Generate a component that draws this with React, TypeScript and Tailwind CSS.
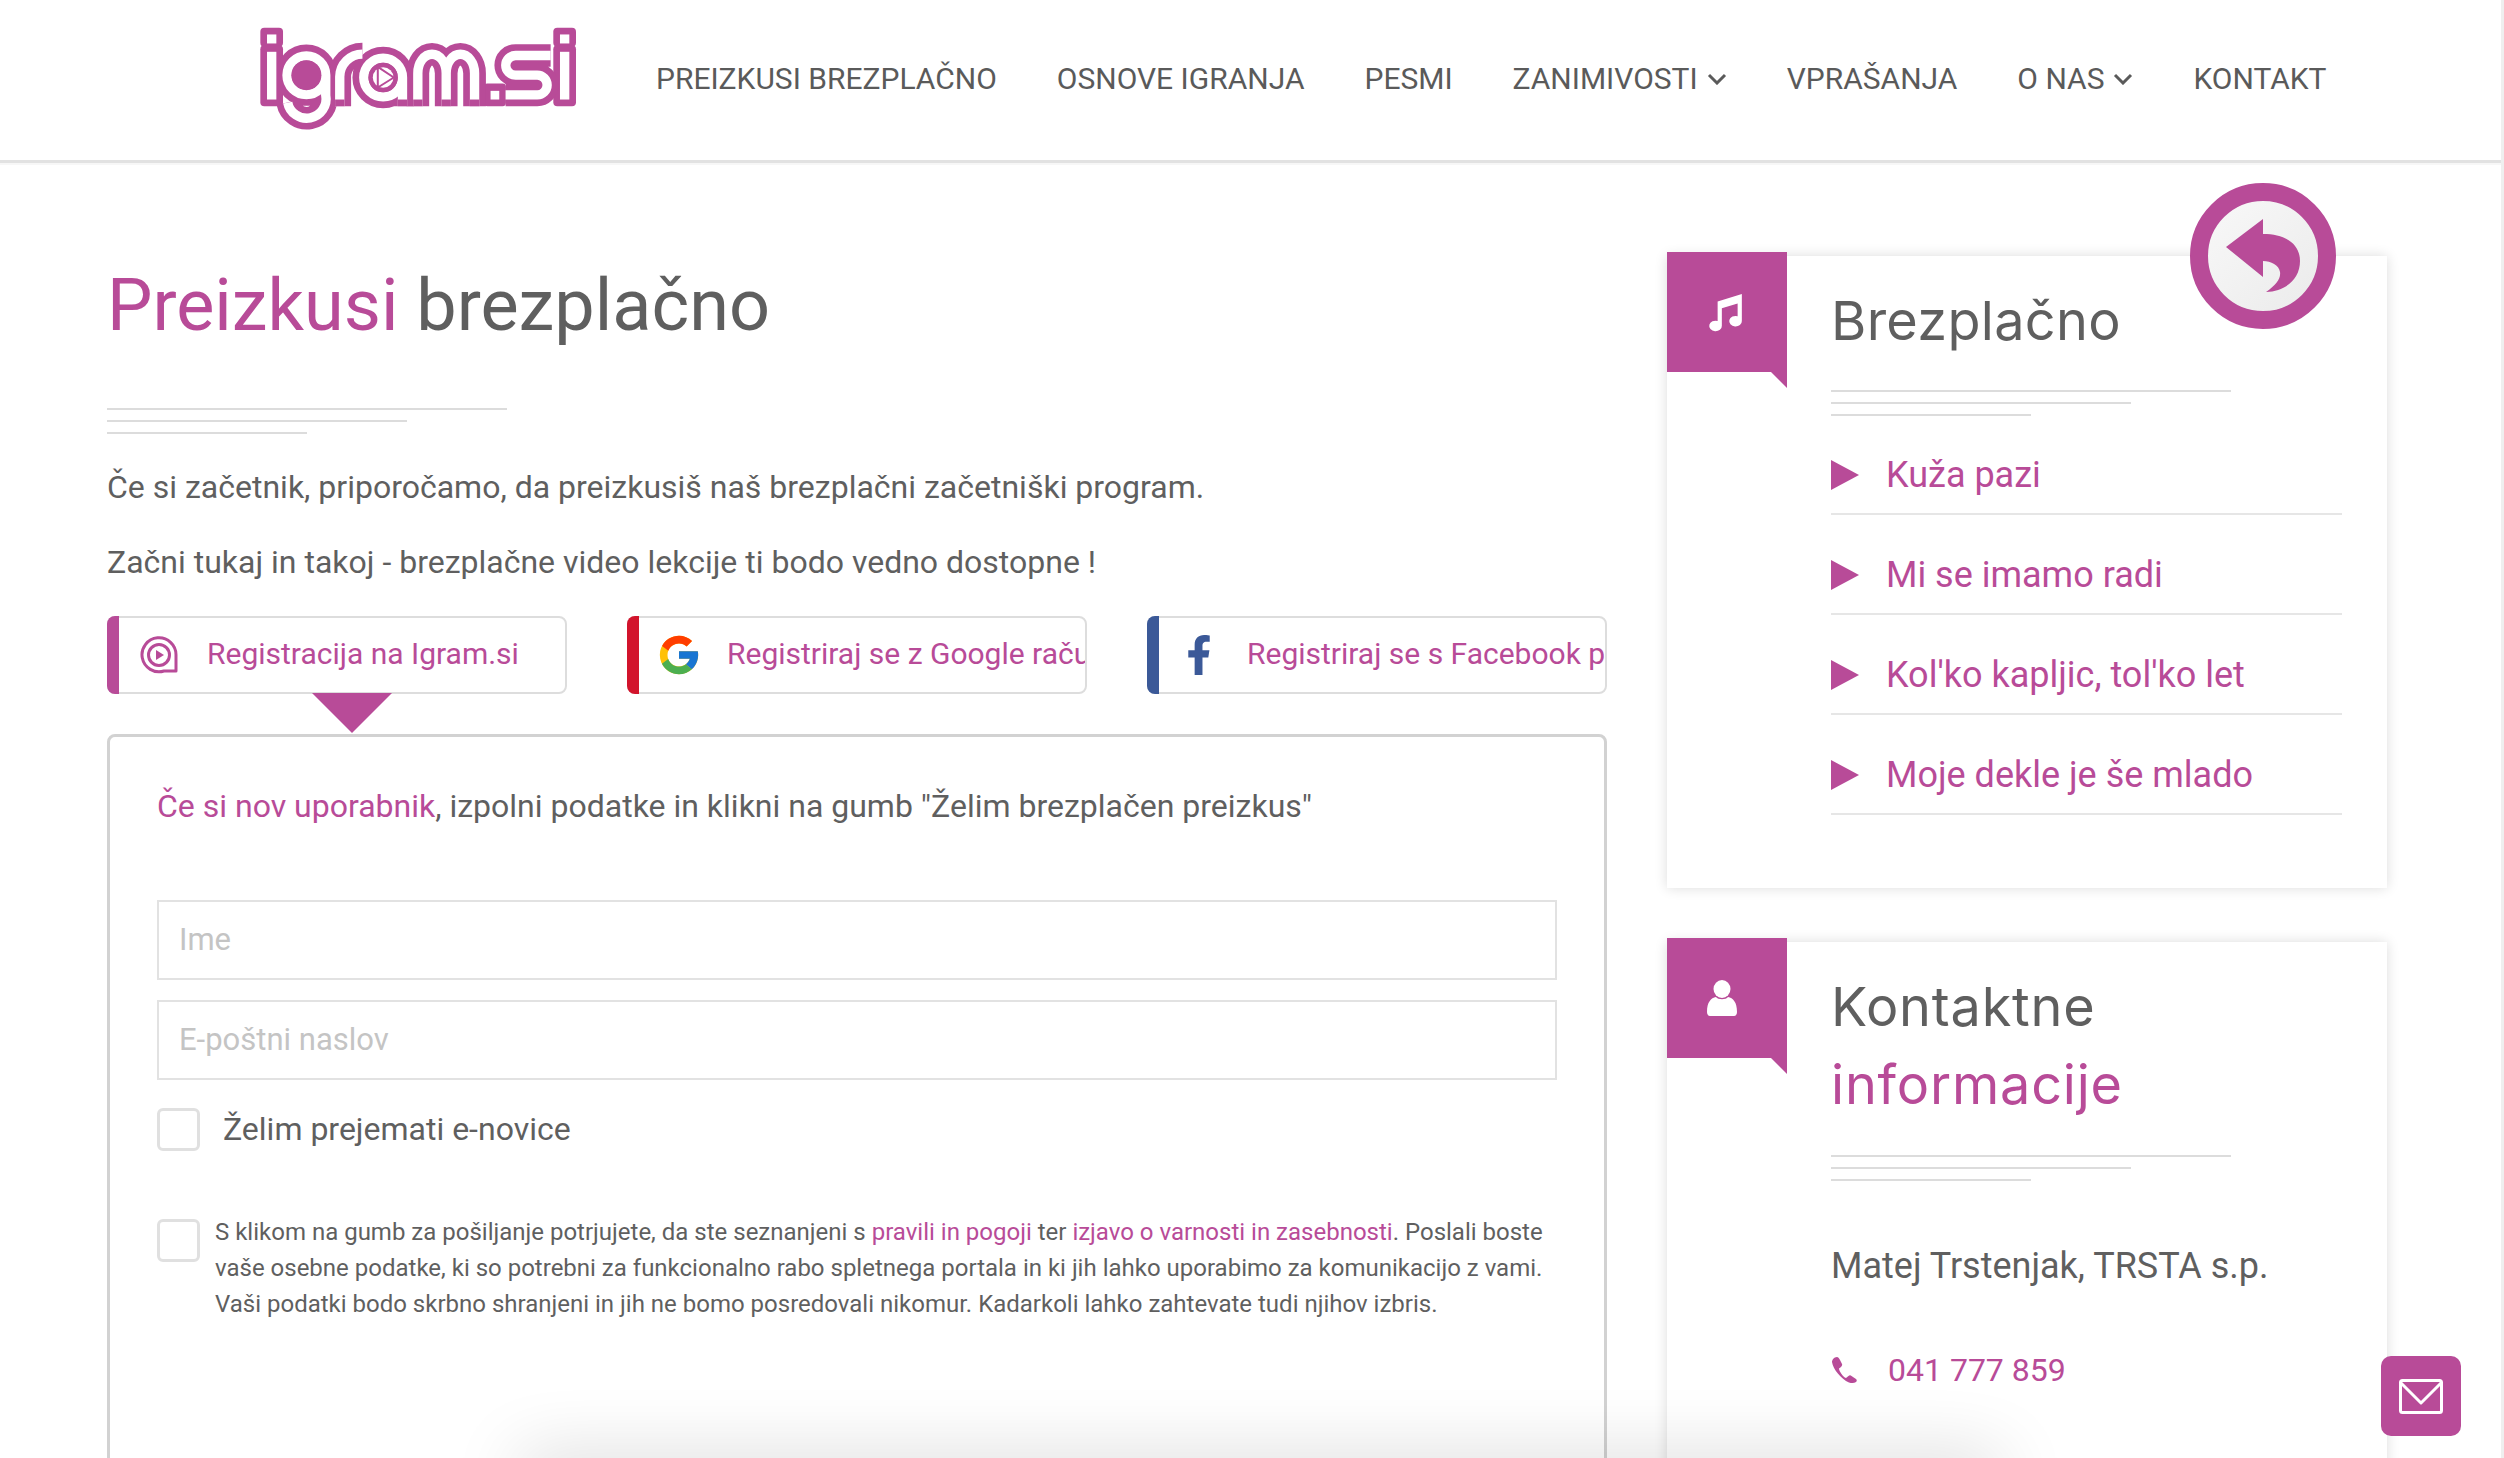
import { FaFacebookF } from "react-icons/fa";
import { FcGoogle } from "react-icons/fc";

const navItems = [
  { label: "PREIZKUSI BREZPLAČNO" },
  { label: "OSNOVE IGRANJA" },
  { label: "PESMI" },
  { label: "ZANIMIVOSTI", chevron: true },
  { label: "VPRAŠANJA" },
  { label: "O NAS", chevron: true },
  { label: "KONTAKT" },
];

const songs = ["Kuža pazi", "Mi se imamo radi", "Kol'ko kapljic, tol'ko let", "Moje dekle je še mlado"];

function Logo() {
  const strokes = (
    <>
      <path d="M318 167a58 58 0 1 0 0 116a58 58 0 1 0 0-116M376 225V285A58 58 0 0 1 262 307" />
      <path d="M418 318V230A68 68 0 0 1 486 162" />
      <path d="M490 232a58 58 0 1 0 116 0a58 58 0 1 0-116 0M606 232V318" />
      <path d="M652 318V219A42 56 0 0 1 737 219V318M737 219A42 56 0 0 1 822 219V318" />
      <path d="M1050 166H945A29 29 0 0 0 945 225H1010A29 29 0 0 1 1010 284H915" />
    </>
  );
  return (
    <svg width="322" height="107" viewBox="170 75 965 320" className="-mt-[4px] shrink-0">
      <g fill="#b84b98">
        <rect x="180" y="83" width="68" height="57" rx="12" />
        <rect x="180" y="135" width="68" height="183" rx="12" />
        <rect x="1058" y="83" width="68" height="57" rx="12" />
        <rect x="1058" y="135" width="68" height="183" rx="12" />
        <rect x="850" y="250" width="66" height="68" rx="10" />
      </g>
      <g fill="none" stroke="#b84b98" strokeWidth="68">
        {strokes}
      </g>
      <g fill="none" stroke="#ffffff" strokeWidth="28">
        {strokes}
      </g>
      <g fill="#b84b98">
        <rect x="404" y="298" width="28" height="20" />
        <rect x="592" y="298" width="28" height="20" />
        <rect x="638" y="298" width="28" height="20" />
        <rect x="723" y="298" width="28" height="20" />
        <rect x="808" y="298" width="28" height="20" />
      </g>
      <g fill="#ffffff">
        <rect x="200" y="103" width="28" height="27" />
        <rect x="200" y="155" width="28" height="143" />
        <rect x="1078" y="103" width="28" height="27" />
        <rect x="1078" y="155" width="28" height="143" />
        <rect x="870" y="272" width="26" height="26" />
      </g>
      <circle cx="318" cy="225" r="45" fill="#b84b98" />
      <circle cx="548" cy="232" r="44" fill="#b84b98" />
      <circle cx="548" cy="232" r="31" fill="#ffffff" />
      <path d="M532 200L580 232L532 262Z" fill="#ffffff" stroke="#b84b98" strokeWidth="6" strokeLinejoin="round" />
    </svg>
  );
}

function IgramMark() {
  return (
    <svg width="38" height="38" viewBox="0 0 38 38" className="shrink-0">
      <path d="M36 35H24A17 17 0 1 1 36 19Z" fill="none" stroke="#b84b98" strokeWidth="3" strokeLinejoin="round" />
      <circle cx="19" cy="19" r="10.5" fill="none" stroke="#b84b98" strokeWidth="3" />
      <path d="M16 14L24 19L16 24Z" fill="#b84b98" />
    </svg>
  );
}

function Rules() {
  return (
    <div className="flex flex-col gap-[10px]">
      <div className="h-[2px] w-[400px] bg-[#dcdcdc]" />
      <div className="h-[2px] w-[300px] bg-[#dcdcdc]" />
      <div className="h-[2px] w-[200px] bg-[#dcdcdc]" />
    </div>
  );
}

function CardFlag({ children }: { children: React.ReactNode }) {
  return (
    <div className="absolute left-0 -top-[4px] h-[136px] w-[120px]">
      <div className="flex h-[120px] w-[120px] items-center justify-center bg-[#b84b98]">{children}</div>
      <div className="absolute right-0 top-[120px] h-[16px] w-[16px] bg-[#b84b98] [clip-path:polygon(0_0,100%_0,100%_100%)]" />
    </div>
  );
}

function RegisterTab({
  bar,
  icon,
  label,
}: {
  bar: string;
  icon: React.ReactNode;
  label: string;
}) {
  return (
    <div className="relative h-[78px] w-[460px] rounded-[8px] border-2 border-[#dddddd] bg-white">
      <div className={`absolute -bottom-[2px] -left-[2px] -top-[2px] w-[12px] rounded-l-[8px] ${bar}`} />
      <div className="absolute left-[31px] top-1/2 flex h-[38px] w-[38px] -translate-y-1/2 items-center justify-center">{icon}</div>
      <div className="flex h-full items-center overflow-hidden whitespace-nowrap pb-[3px] pl-[98px]">
        <span className="text-[30px] text-[#b84b98]">{label}</span>
      </div>
    </div>
  );
}

function FormCheck() {
  return <div className="h-[43px] w-[43px] shrink-0 rounded-[6px] border-[3px] border-[#e0e0e0] bg-white" />;
}

export default function App() {
  return (
    <div className="relative h-[1458px] w-full overflow-hidden bg-white font-['Roboto',sans-serif] text-[#5f5f5f]">
      <header className="flex h-[163px] items-center border-b-[3px] border-[#e2e2e2] pl-[257px] shadow-[0_2px_0_#f7f7f7]">
        <Logo />
        <nav className="ml-[77px] -mt-[3px] flex items-center gap-[60px]">
          {navItems.map((item) => (
            <a key={item.label} className="flex items-center gap-[9px] whitespace-nowrap text-[30px] text-[#5a5a5a]">
              {item.label}
              {item.chevron && (
                <svg width="20" height="12" viewBox="0 0 20 12" fill="none" stroke="#5a5a5a" strokeWidth="3">
                  <path d="M2 2L10 10L18 2" />
                </svg>
              )}
            </a>
          ))}
        </nav>
      </header>

      <div className="flex items-start gap-[60px] pl-[107px]">
        <main className="w-[1500px] shrink-0">
          <h1 className="mt-[98px] text-[72px] leading-[90px]">
            <span className="text-[#b84b98]">Preizkusi</span> brezplačno
          </h1>
          <div className="mt-[57px]">
            <Rules />
          </div>
          <p className="mt-[29px] text-[32px] leading-[48px]">
            Če si začetnik, priporočamo, da preizkusiš naš brezplačni začetniški program.
          </p>
          <p className="mt-[27px] text-[32px] leading-[48px]">
            Začni tukaj in takoj - brezplačne video lekcije ti bodo vedno dostopne !
          </p>

          <div className="relative mt-[30px] flex gap-[60px]">
            <RegisterTab bar="bg-[#b84b98]" icon={<IgramMark />} label="Registracija na Igram.si" />
            <RegisterTab bar="bg-[#d2142c]" icon={<FcGoogle size={46} className="shrink-0" />} label="Registriraj se z Google računom" />
            <RegisterTab
              bar="bg-[#3b5998]"
              icon={<FaFacebookF size={40} className="shrink-0 text-[#3b5998]" />}
              label="Registriraj se s Facebook profilom"
            />
            <div className="absolute left-[205px] top-[77px] h-[40px] w-[80px] bg-[#b84b98] [clip-path:polygon(0_0,100%_0,50%_100%)]" />
          </div>

          <section className="mt-[40px] h-[900px] rounded-[8px] border-[3px] border-[#d2d2d2] px-[47px] pt-[45px]">
            <p className="text-[32px] leading-[48px]">
              <span className="text-[#b84b98]">Če si nov uporabnik</span>, izpolni podatke in klikni na gumb "Želim
              brezplačen preizkus"
            </p>
            <div className="mt-[70px] flex h-[80px] items-center border-2 border-[#e2e2e2] pl-[20px] text-[31px] text-[#c4c4c4]">
              Ime
            </div>
            <div className="mt-[20px] flex h-[80px] items-center border-2 border-[#e2e2e2] pl-[20px] text-[31px] text-[#c4c4c4]">
              E-poštni naslov
            </div>
            <div className="mt-[25px] flex items-center gap-[23px]">
              <FormCheck />
              <span className="text-[32px]">Želim prejemati e-novice</span>
            </div>
            <div className="mt-[66px] flex gap-[15px]">
              <FormCheck />
              <p className="-mt-[5px] whitespace-nowrap text-[24px] leading-[36px]">
                S klikom na gumb za pošiljanje potrjujete, da ste seznanjeni s{" "}
                <span className="text-[#b84b98]">pravili in pogoji</span> ter{" "}
                <span className="text-[#b84b98]">izjavo o varnosti in zasebnosti</span>. Poslali boste
                <br />
                vaše osebne podatke, ki so potrebni za funkcionalno rabo spletnega portala in ki jih lahko uporabimo za komunikacijo z vami.
                <br />
                Vaši podatki bodo skrbno shranjeni in jih ne bomo posredovali nikomur. Kadarkoli lahko zahtevate tudi njihov izbris.
              </p>
            </div>
          </section>
        </main>

        <aside className="mt-[93px] w-[720px] shrink-0">
          <div className="relative h-[632px] bg-white pl-[164px] pr-[45px] pt-[26px] shadow-[0_0_12px_rgba(0,0,0,0.14)]">
            <CardFlag>
              <svg width="42" height="40" viewBox="0 0 38 38" fill="#ffffff" className="-ml-[4px]">
                <path d="M12 9L35 2V27.500A6 5 0 1 1 31 23V11L16 15.500V32A6 5 0 1 1 12 27.500Z" />
              </svg>
            </CardFlag>
            <h2 className="font-['Inter',sans-serif] text-[54px] leading-[78px] tracking-[0.3px]">Brezplačno</h2>
            <div className="mt-[30px]">
              <Rules />
            </div>
            <ul className="-mt-[1px]">
              {songs.map((song) => (
                <li key={song} className="mt-[22px] flex h-[78px] items-center gap-[27px] border-b-2 border-[#e6e6e6] text-[36px] text-[#b84b98]">
                  <svg width="28" height="30" viewBox="0 0 28 30" className="shrink-0" fill="#b84b98">
                    <path d="M0 0L28 15L0 30Z" />
                  </svg>
                  {song}
                </li>
              ))}
            </ul>
          </div>

          <div className="relative mt-[54px] h-[700px] bg-white pl-[164px] pr-[45px] pt-[26px] shadow-[0_0_12px_rgba(0,0,0,0.14)]">
            <CardFlag>
              <svg width="30" height="36" viewBox="0 0 30 36" fill="#ffffff" className="-ml-[10px]">
                <ellipse cx="15" cy="9" rx="8.500" ry="9" />
                <path d="M0 32C0 22 4 18 9 17C11 20 19 20 21 17C26 18 30 22 30 32C30 34 29 36 27 36H3C1 36 0 34 0 32Z" />
              </svg>
            </CardFlag>
            <h2 className="font-['Inter',sans-serif] text-[54px] leading-[78px] tracking-[0.8px]">
              Kontaktne
              <br />
              <span className="text-[#b84b98]">informacije</span>
            </h2>
            <div className="mt-[31px]">
              <Rules />
            </div>
            <p className="mt-[58px] text-[36px] leading-[54px]">Matej Trstenjak, TRSTA s.p.</p>
            <p className="mt-[50px] flex items-center gap-[31px] text-[32px] leading-[54px] text-[#b84b98]">
              <svg width="26" height="26" viewBox="0 0 26 26" fill="#b84b98" className="shrink-0">
                <path d="M6 0C7 0 8 1 9 3L11 7C11.500 8 11 9 10 10L8 11.500C8 14 12 20 15 21L17.500 19C18.500 18 19.500 18 20.500 19L25 22C26 23 26 24 25 25C23 26 20 26.500 18 25.500C10 22 2 12 1 5C1 3 3 0 6 0Z" />
              </svg>
              041 777 859
            </p>
          </div>
        </aside>
      </div>

      {/* back button, sits over the first card */}
      <div className="absolute left-[2190px] top-[183px] flex h-[146px] w-[146px] items-center justify-center rounded-full border-[18px] border-[#b84b98] bg-gradient-to-br from-[#f8f8f8] to-[#ebebeb]">
        <svg width="75" height="75" viewBox="0 0 75 75" fill="#b84b98">
          <path d="M0 28L37 0V15C60 15 74 25 74 42C74 60 60 72 40 73C50 66 55 60 54 53C53 46 45 42 37 42V58Z" />
        </svg>
      </div>

      {/* floating mail button */}
      <div className="fixed left-[2381px] top-[1356px] flex h-[80px] w-[80px] items-center justify-center rounded-[10px] bg-[#b84b98]">
        <svg width="44" height="35" viewBox="0 0 44 35" fill="none" stroke="#ffffff" strokeWidth="3" strokeLinejoin="round">
          <rect x="1.500" y="1.500" width="41" height="32" rx="2" />
          <path d="M2 4L22 24L42 4" />
        </svg>
      </div>

      {/* shadow of the bar hidden below the fold */}
      <div className="fixed left-[520px] top-[1458px] h-[40px] w-[1480px] shadow-[0_0_70px_rgba(0,0,0,0.18)]" />

      {/* pale strip down the right edge */}
      <div className="absolute bottom-0 right-0 top-0 w-[3px] bg-[#efefef]" />
    </div>
  );
}
